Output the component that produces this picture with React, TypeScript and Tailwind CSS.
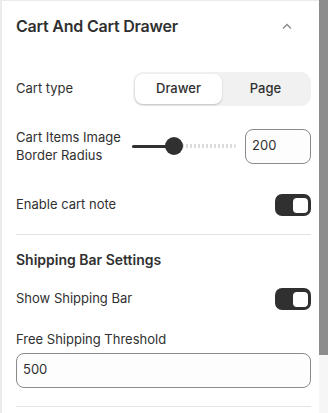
import React from "react";

function Toggle() {
  return (
    <div className="w-[36px] h-[22px] rounded-[7px] bg-[#303030] flex items-center justify-end pr-[3px]">
      <div className="w-[15px] h-[15px] rounded-[4px] bg-white" />
    </div>
  );
}

export default function App() {
  return (
    <div className="w-[328px] h-[413px] overflow-hidden bg-white flex text-[#303030]" style={{ fontFamily: "Inter, 'Noto Sans', sans-serif" }}>
      <div className="w-[319px] h-full border-l-2 border-t border-[#ebebeb] pl-[14px] pr-[8px] flex flex-col">
        <div className="flex items-center justify-between h-[50px]">
          <div className="text-[16px] font-semibold text-[#303030] tracking-[-0.2px]">Cart And Cart Drawer</div>
          <svg width="12" height="8" viewBox="0 0 12 8" className="mr-[18px]">
            <path d="M2 6.5 L6 2.5 L10 6.5" stroke="#8a8a8a" strokeWidth="1.3" fill="none" />
          </svg>
        </div>

        <div className="flex items-center justify-between mt-[21px] h-[34px]">
          <div className="text-[13px]">Cart type</div>
          <div className="w-[178px] h-[34px] rounded-[10px] bg-[#f1f1f1] p-[2px] flex">
            <div className="flex-1 rounded-[8px] bg-white shadow-[0_1px_2px_rgba(0,0,0,0.2)] flex items-center justify-center text-[13px] font-medium">Drawer</div>
            <div className="flex-1 flex items-center justify-center text-[13px] font-medium">Page</div>
          </div>
        </div>

        <div className="flex items-center justify-between mt-[22px] h-[36px]">
          <div className="text-[13px] leading-[18px] w-[112px]">Cart Items Image Border Radius</div>
          <div className="flex items-center gap-[9px]">
            <div className="relative w-[104px] h-[18px] flex items-center">
              <div className="h-[3px] w-[42px] bg-[#303030] rounded-full" />
              <div className="h-[4px] flex-1 rounded-full bg-[repeating-linear-gradient(90deg,#dcdcdc_0px,#dcdcdc_2px,transparent_2px,transparent_4px)]" />
              <div className="absolute left-[33px] top-0 w-[18px] h-[18px] rounded-full bg-[#303030]" />
            </div>
            <div className="w-[66px] h-[35px] rounded-[8px] border border-[#8a8a8a] bg-[#fdfdfd] flex items-center pl-[6px] text-[13px]">200</div>
          </div>
        </div>

        <div className="flex items-center justify-between mt-[30px] h-[22px]">
          <div className="text-[13px]">Enable cart note</div>
          <Toggle />
        </div>

        <div className="h-px bg-[#e3e3e3] mt-[18px]" />

        <div className="text-[14px] font-semibold mt-[14px]">Shipping Bar Settings</div>

        <div className="flex items-center justify-between mt-[18px] h-[22px]">
          <div className="text-[13px]">Show Shipping Bar</div>
          <Toggle />
        </div>

        <div className="text-[13px] mt-[20px]">Free Shipping Threshold</div>
        <div className="h-[35px] mt-[3px] rounded-[8px] border border-[#8a8a8a] bg-[#fdfdfd] flex items-center pl-[6px] text-[13px]">500</div>

        <div className="h-px bg-[#e3e3e3] mt-[18px]" />
      </div>
      <div className="w-[9px] h-full flex flex-col">
        <div className="h-[355px] bg-[#8c8c8c]" />
        <div className="flex-1 bg-[#f6f6f6]" />
      </div>
    </div>
  );
}
